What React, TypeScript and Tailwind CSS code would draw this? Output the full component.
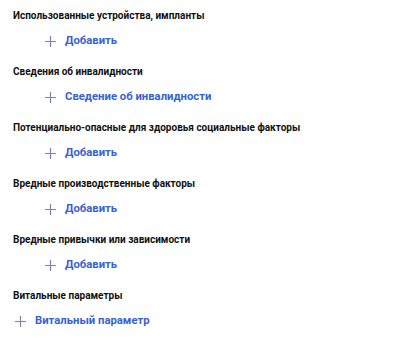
import React from "react";

interface Section {
  title: string;
  action: string;
  indent: "wide" | "narrow";
}

const sections: Section[] = [
  { title: "Использованные устройства, импланты", action: "Добавить", indent: "wide" },
  { title: "Сведения об инвалидности", action: "Сведение об инвалидности", indent: "wide" },
  { title: "Потенциально-опасные для здоровья социальные факторы", action: "Добавить", indent: "wide" },
  { title: "Вредные производственные факторы", action: "Добавить", indent: "wide" },
  { title: "Вредные привычки или зависимости", action: "Добавить", indent: "wide" },
  { title: "Витальные параметры", action: "Витальный параметр", indent: "narrow" },
];

const PlusIcon = () => (
  <svg width="11" height="11" viewBox="0 0 11 11" fill="none">
    <path d="M5.5 0v11M0 5.5h11" stroke="#7e84ad" strokeWidth="1.2" />
  </svg>
);

export default function App() {
  return (
    <div className="w-[396px] h-[341px] bg-white px-[13px] pt-[9px] overflow-hidden font-['Roboto','Liberation_Sans',sans-serif]">
      {sections.map((s) => (
        <div key={s.title} className="flex flex-col h-[56px]">
          <div className="h-[14px] leading-[14px] text-[10px] font-bold text-[#111111]">
            {s.title}
          </div>
          <button
            className={
              s.indent === "wide"
                ? "mt-[4px] h-[28px] flex items-center gap-[9px] self-start ml-[32px]"
                : "mt-[4px] h-[28px] flex items-center gap-[9px] self-start ml-[2px]"
            }
          >
            <PlusIcon />
            <span className="text-[11.3px] font-bold text-[#3761d6]">{s.action}</span>
          </button>
        </div>
      ))}
    </div>
  );
}
